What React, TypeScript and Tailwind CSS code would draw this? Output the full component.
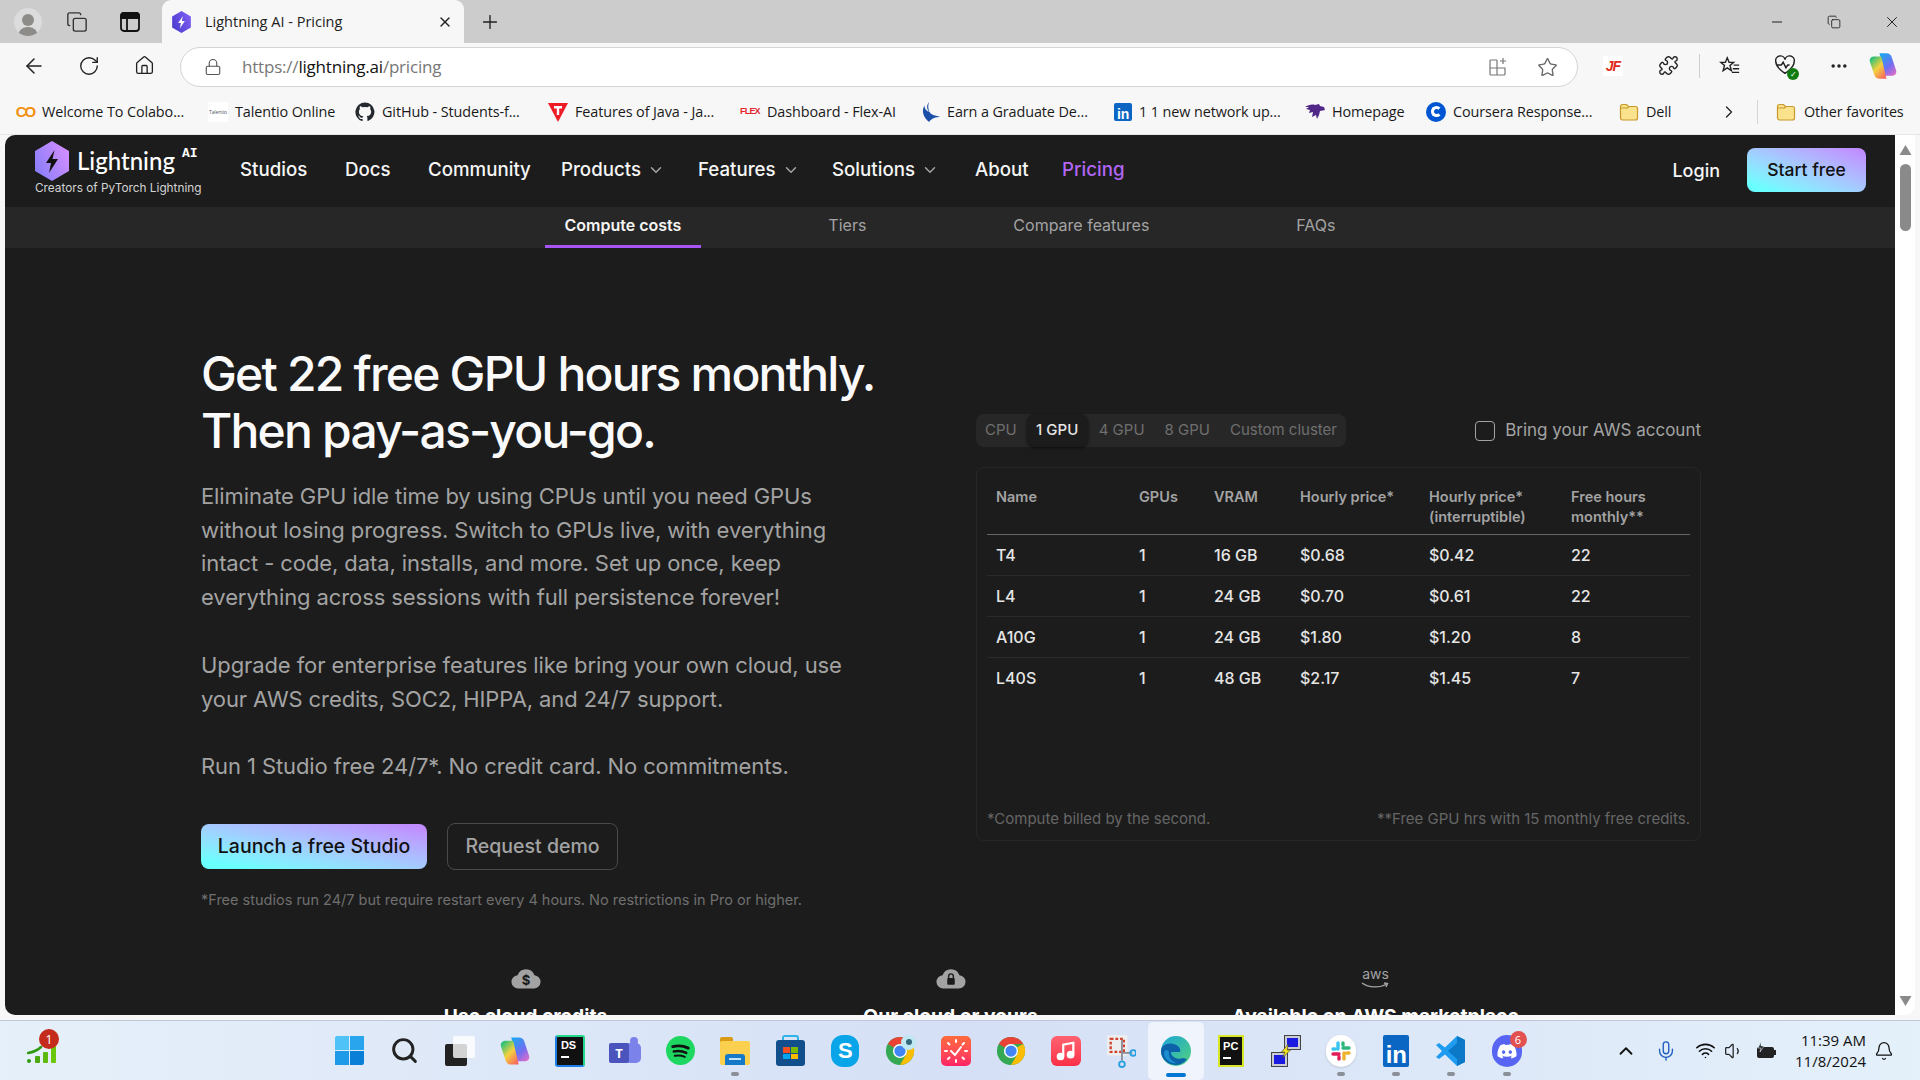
import React from 'react';
import {
  ArrowLeft, RotateCw, House, Lock, Star, Puzzle, Ellipsis, ChevronRight, ChevronDown, ChevronUp,
  Bell, Mic, Wifi, Volume1, Minus, X, Plus, Copy, Search,
} from 'lucide-react';

const Hex = ({ className, from, to, bolt }: { className: string; from: string; to: string; bolt: string }) => {
  const id = `hex-${from.slice(1)}`;
  return (
    <svg viewBox="0 0 34 40" className={className}>
      <defs>
        <linearGradient id={id} x1="0" y1="1" x2="1" y2="0.4">
          <stop offset="0" stopColor={from} />
          <stop offset="1" stopColor={to} />
        </linearGradient>
      </defs>
      <path d="M17 0 34 10v20L17 40 0 30V10z" fill={`url(#${id})`} />
      <path d="M19.5 9 11 22h5l-2 10 9-14h-5.5z" fill={bolt} />
    </svg>
  );
};

const Folder = () => (
  <svg viewBox="0 0 20 20" className="w-5 h-5">
    <path d="M1.5 4.5a2 2 0 0 1 2-2h4l2 2h7a2 2 0 0 1 2 2v9.500a2 2 0 0 1-2 2h-13a2 2 0 0 1-2-2z" fill="#fbe38e" stroke="#c79a2b" strokeWidth="1.200" />
    <path d="M1.500 6h7l1.500-1.500" fill="none" stroke="#c79a2b" strokeWidth="1.200" />
  </svg>
);

const Copilot = ({ className, id }: { className: string; id: string }) => (
  <svg viewBox="0 0 32 32" className={className}>
    <defs>
      <linearGradient id={`${id}-a`} x1="0.2" y1="0" x2="0.9" y2="1">
        <stop offset="0" stopColor="#1fa5f0" />
        <stop offset="0.55" stopColor="#6f6ff2" />
        <stop offset="1" stopColor="#e46cc8" />
      </linearGradient>
      <linearGradient id={`${id}-b`} x1="0.1" y1="0.1" x2="0.8" y2="1">
        <stop offset="0" stopColor="#27c27a" />
        <stop offset="0.5" stopColor="#f4d13f" />
        <stop offset="1" stopColor="#f66b5c" />
      </linearGradient>
    </defs>
    <path d="M12 1.500h8c3 0 5 1.500 6 4.500l5 15c1 3.500-1.500 6-5 6h-8z" fill={`url(#${id}-a)`} />
    <path d="M20 30.500h-8c-3 0-5-1.500-6-4.500L1 11C0 7.500 2.500 5 6 5h8z" fill={`url(#${id}-b)`} />
  </svg>
);

const GitHubMark = () => (
  <svg viewBox="0 0 24 24" className="w-5 h-5" fill="#24292f">
    <path d="M12 .5a11.500 11.500 0 0 0-3.640 22.410c.58.100.79-.25.790-.56v-2c-3.200.700-3.880-1.540-3.880-1.540-.52-1.330-1.280-1.690-1.280-1.690-1.050-.71.080-.7.080-.7 1.160.08 1.770 1.190 1.770 1.190 1.030 1.760 2.700 1.250 3.360.96.100-.75.400-1.250.730-1.540-2.550-.29-5.240-1.280-5.240-5.680 0-1.250.45-2.280 1.180-3.080-.12-.29-.51-1.460.11-3.040 0 0 .96-.31 3.160 1.180a11 11 0 0 1 5.760 0c2.200-1.490 3.160-1.180 3.160-1.180.62 1.580.23 2.750.11 3.040.74.800 1.180 1.830 1.180 3.080 0 4.410-2.690 5.380-5.250 5.670.410.360.780 1.050.780 2.120v3.140c0 .31.210.67.800.56A11.500 11.500 0 0 0 12 .5z" />
  </svg>
);

const LinkedIn = ({ className }: { className: string }) => (
  <span className={`${className} bg-[#0a66c2] rounded-[2px] flex items-end justify-center text-white font-bold leading-none font-['Liberation_Sans',sans-serif]`}>in</span>
);

const Chrome = ({ className }: { className: string }) => (
  <svg viewBox="0 0 32 32" className={className}>
    <circle cx="16" cy="16" r="15" fill="#34a853" />
    <path d="M16 1a15 15 0 0 1 13 7.500H16a7.500 7.500 0 0 0-6.500 3.750L3 8.500A15 15 0 0 1 16 1z" fill="#ea4335" />
    <path d="M29 8.500A15 15 0 0 1 16 31l6.500-11.250A7.500 7.500 0 0 0 22.500 12z" fill="#fbbc04" />
    <circle cx="16" cy="16" r="7.500" fill="#fff" />
    <circle cx="16" cy="16" r="6" fill="#4285f4" />
  </svg>
);

const bookmarks = [
  { label: 'Welcome To Colabo...', w: 'w-[193px]', icon: <span className="w-5 text-center text-[15px] leading-none font-black tracking-[-2px] text-[#f29111] font-['Liberation_Sans',sans-serif]">CO</span> },
  { label: 'Talentio Online', w: 'w-[147px]', icon: <span className="w-5 h-5 bg-white text-[5px] leading-5 text-center text-gray-600">Talentio</span> },
  { label: 'GitHub - Students-f...', w: 'w-[193px]', icon: <GitHubMark /> },
  { label: 'Features of Java - Ja...', w: 'w-[192px]', icon: <svg viewBox="0 0 20 20" className="w-5 h-5"><path d="M0 1h20L10 20z" fill="#ee1c25" /><path d="M6 4h8v2.500h-2.800V13H8.800V6.500H6z" fill="#fff" /></svg> },
  { label: 'Dashboard - Flex-AI', w: 'w-[180px]', icon: <span className="w-5 text-[9px] font-black leading-none tracking-[-0.8px] text-[#e3262e] font-['Liberation_Sans',sans-serif]">FLEX</span> },
  { label: 'Earn a Graduate De...', w: 'w-[194px]', icon: <svg viewBox="0 0 20 20" className="w-5 h-5" fill="#1c4fa8"><path d="M9 0C6 4 7 7 9 10 5 8 4 5 5 3 1 8 3 15 9 20c1-2 3-3 5-4 2-1 4-1 6-1-4-2-9-1-11-6-1-3-1-6 0-9z" /></svg> },
  { label: '1 1 new network up...', w: 'w-[191px]', icon: <LinkedIn className="w-[18px] h-[18px] text-[14px]" /> },
  { label: 'Homepage', w: 'w-[121px]', icon: <svg viewBox="0 0 20 20" className="w-5 h-5" fill="#512888"><path d="M0 5c3-2 7-3 10-2l4-1 1 2 4 1 1 3-5 1-1 4-2 4-1-4-4 2 1-5-4 1 1-3-4-1 3-2z" /></svg> },
  { label: 'Coursera Response...', w: 'w-[193px]', icon: <span className="w-5 h-5 rounded-full bg-[#0056d2] flex items-center justify-center"><span className="w-[11px] h-[11px] rounded-full border-[3px] border-white border-r-transparent" /></span> },
  { label: 'Dell', w: 'w-[106px]', icon: <Folder /> },
];

const navItems = [
  { label: 'Studios', w: 'w-[105px]' },
  { label: 'Docs', w: 'w-[83px]' },
  { label: 'Community', w: 'w-[133px]' },
  { label: 'Products', w: 'w-[137px]', caret: true },
  { label: 'Features', w: 'w-[134px]', caret: true },
  { label: 'Solutions', w: 'w-[143px]', caret: true },
  { label: 'About', w: 'w-[87px]' },
];

const subNav = ['Compute costs', 'Tiers', 'Compare features', 'FAQs'];

const rows = [
  ['T4', '1', '16 GB', '$0.68', '$0.42', '22'],
  ['L4', '1', '24 GB', '$0.70', '$0.61', '22'],
  ['A10G', '1', '24 GB', '$1.80', '$1.20', '8'],
  ['L40S', '1', '48 GB', '$2.17', '$1.45', '7'],
];

const gridCols = 'grid grid-cols-[143px_75px_86px_129px_142px_1fr] pl-[9px]';

const Dot = () => <span className="absolute bottom-[4px] left-1/2 -translate-x-1/2 w-2 h-1 rounded-full bg-[#8a8f98]" />;

const taskIcons: { key: string; node: React.ReactNode; dot?: boolean; active?: boolean }[] = [
  { key: 'win', node: <span className="grid grid-cols-2 gap-[1px] w-[29px] h-[29px]"><i className="bg-[#4fc3f7] rounded-tl-[2px]" /><i className="bg-[#29a5ee]" /><i className="bg-[#1e9be8]" /><i className="bg-[#0a7fd8] rounded-br-[2px]" /></span> },
  { key: 'search', node: <Search className="w-[29px] h-[29px] text-[#222]" strokeWidth={2.4} /> },
  { key: 'tasks', node: <span className="relative w-[30px] h-[30px]"><span className="absolute left-0 bottom-0 w-[22px] h-[22px] bg-[#222] rounded-[2px]" /><span className="absolute right-0 top-0 w-[22px] h-[22px] bg-white/80 rounded-[2px]" /></span> },
  { key: 'copilot', node: <Copilot id="cop-task" className="w-[30px] h-[32px]" /> },
  { key: 'ds', node: <span className="w-[30px] h-[32px] bg-[#111] border-2 border-t-[#21d789] border-r-[#21d789] border-l-[#1a7fe8] border-b-[#1a7fe8] rounded-[3px] text-white text-[11px] font-bold leading-[13px] pl-[4px] pt-[2px] font-['Liberation_Sans',sans-serif]">DS<span className="block w-2 h-[2px] bg-white mt-[4px]" /></span> },
  { key: 'teams', node: <span className="relative w-[32px] h-[28px]"><span className="absolute right-0 top-[6px] w-[16px] h-[20px] bg-[#7b83eb] rounded-[5px]" /><span className="absolute right-[3px] top-0 w-[8px] h-[8px] bg-[#7b83eb] rounded-full" /><span className="absolute left-0 top-[6px] w-[20px] h-[20px] bg-[#4b53bc] rounded-[2px] text-white text-[13px] font-bold text-center leading-[20px]">T</span></span> },
  { key: 'spotify', node: <svg viewBox="0 0 30 30" className="w-[29px] h-[29px]"><circle cx="15" cy="15" r="15" fill="#1ed760" /><g fill="none" stroke="#111" strokeLinecap="round"><path d="M7 11c6-1.500 11-1 16 1.500" strokeWidth="3" /><path d="M8 16c5-1 9-.5 13 1.500" strokeWidth="2.500" /><path d="M9 20.500c4-.8 7-.5 10.500 1" strokeWidth="2" /></g></svg> },
  { key: 'explorer', dot: true, node: <span className="relative w-[30px] h-[28px]"><span className="absolute left-0 top-0 w-[13px] h-[8px] bg-[#d99a16] rounded-t-[2px]" /><span className="absolute inset-x-0 top-[4px] bottom-0 bg-[#fbd04f] rounded-[2px]" /><span className="absolute left-[5px] right-[5px] bottom-0 h-[11px] bg-[#1578c9] rounded-t-[3px]"><span className="block mx-auto mt-[4px] w-[12px] h-[2px] bg-[#bfe4ff]" /></span></span> },
  { key: 'store', node: <span className="relative w-[29px] h-[31px]"><span className="absolute left-[6px] top-0 w-[17px] h-[8px] border-2 border-b-0 border-[#2fb4e8] rounded-t-[3px]" /><span className="absolute inset-x-0 top-[5px] bottom-0 bg-[#114f8c] rounded-[3px] grid grid-cols-2 gap-[1px] p-[7px]"><i className="bg-[#f25022]" /><i className="bg-[#7fba00]" /><i className="bg-[#00a4ef]" /><i className="bg-[#ffb900]" /></span></span> },
  { key: 'skype', node: <span className="w-[28px] h-[32px] rounded-[12px] bg-[#0aa5e8] text-white font-bold text-[22px] leading-[32px] text-center font-['Liberation_Sans',sans-serif]">S</span> },
  { key: 'chrome-profile', node: <span className="relative w-[30px] h-[30px]"><Chrome className="w-[30px] h-[30px]" /><span className="absolute -top-[1px] -right-[1px] w-[15px] h-[15px] rounded-full bg-[#bfe8f2] flex items-center justify-center"><span className="w-[6px] h-[6px] rounded-full bg-[#33697d]" /></span></span> },
  { key: 'clock', node: <span className="w-[30px] h-[30px] rounded-[5px] bg-gradient-to-b from-[#ff6a3c] to-[#ff1f63] flex items-center justify-center"><svg viewBox="0 0 30 30" className="w-[30px] h-[30px]" fill="none" stroke="#fff" strokeWidth="2" strokeLinecap="round"><path d="M10 15l4 4 6-8M15 4v2M15 24v2M4 15h2M24 15h2M7 7l1.500 1.500M23 7l-1.500 1.500M7 23l1.500-1.500M23 23l-1.500-1.500" /></svg></span> },
  { key: 'chrome', node: <Chrome className="w-[30px] h-[30px]" /> },
  { key: 'music', node: <span className="w-[30px] h-[30px] rounded-[6px] bg-gradient-to-b from-[#ff6170] to-[#fb2d48] flex items-center justify-center"><svg viewBox="0 0 24 24" className="w-[22px] h-[22px]" fill="none" stroke="#fff" strokeWidth="2.400"><path d="M9 18V5l11-2v13" /><circle cx="6" cy="18" r="3" fill="#fff" /><circle cx="17" cy="16" r="3" fill="#fff" /></svg></span> },
  { key: 'snip', node: <svg viewBox="0 0 32 36" className="w-[30px] h-[34px]"><rect x="1" y="1" width="22" height="22" rx="2" fill="#eceef0" /><rect x="5" y="5" width="14" height="14" fill="none" stroke="#d4402b" strokeWidth="2.500" strokeDasharray="3 2" /><path d="M17 6v22" stroke="#8a8f98" strokeWidth="2" /><path d="M17 20 28 20" stroke="#8a8f98" strokeWidth="2" /><circle cx="17" cy="32" r="3" fill="none" stroke="#2a9fe0" strokeWidth="2" /><circle cx="29" cy="20" r="3" fill="none" stroke="#2a9fe0" strokeWidth="2" /></svg> },
  { key: 'edge', active: true, node: <svg viewBox="0 0 32 32" className="w-[32px] h-[32px]"><defs><linearGradient id="edge-a" x1="0" y1="0" x2="1" y2="1"><stop offset="0" stopColor="#1ba5d8" /><stop offset="1" stopColor="#52d17c" /></linearGradient></defs><circle cx="16" cy="16" r="15" fill="url(#edge-a)" /><path d="M1 16c0-6 7-9 13-7 5 1.500 7 5 6 8H11c0 5 6 8 12 6l4 1c-3 4-7 6-11 6C8 30 1 24 1 16z" fill="#0c62a8" /><path d="M9 17c-1 5 3 10 8 11-6 1-12-3-13-9 0-3 2-6 5-2z" fill="#1b8fd0" /></svg> },
  { key: 'pycharm', node: <span className="w-[26px] h-[32px] bg-[#111] border-2 border-[#d8e62a] text-white text-[11px] font-bold leading-[13px] pl-[3px] pt-[3px] font-['Liberation_Sans',sans-serif]">PC<span className="block w-2 h-[2px] bg-white mt-[4px]" /></span> },
  { key: 'putty', node: <span className="relative w-[30px] h-[32px]"><span className="absolute right-0 top-0 w-[17px] h-[15px] bg-[#c9ccd2] border border-[#444] p-[2px]"><span className="block w-full h-full bg-[#1a1ae0]" /></span><span className="absolute left-0 bottom-0 w-[17px] h-[15px] bg-[#c9ccd2] border border-[#444] p-[2px]"><span className="block w-full h-full bg-[#1a1ae0]" /></span><svg viewBox="0 0 12 12" className="absolute left-[8px] top-[9px] w-[14px] h-[14px]"><path d="M8 0 2 7h3l-2 5 7-7H7z" fill="#f3e11b" stroke="#333" strokeWidth=".5" /></svg></span> },
  { key: 'slack', dot: true, node: <span className="w-[30px] h-[32px] rounded-full bg-white shadow-sm flex items-center justify-center"><svg viewBox="0 0 20 20" className="w-[20px] h-[20px]" strokeWidth="3.400" strokeLinecap="round" fill="none"><path d="M7 2v6M2 8h2" stroke="#36c5f0" /><path d="M18 7h-6M12 2v2" stroke="#2eb67d" /><path d="M13 18v-6M18 12h-2" stroke="#ecb22e" /><path d="M2 13h6M8 18v-2" stroke="#e01e5a" /></svg></span> },
  { key: 'linkedin', dot: true, node: <LinkedIn className="w-[26px] h-[32px] text-[24px]" /> },
  { key: 'vscode', dot: true, node: <svg viewBox="0 0 30 32" className="w-[30px] h-[34px]"><path d="M21 1l8 4v22l-8 4L9 19.500 3 24l-3-2 6-6-6-6 3-2 6 4.500z" fill="#1f9cf0" /><path d="M21 1l8 4v22l-8 4zM21 8l-9 8 9 8z" fill="#0b79c7" fillRule="evenodd" /></svg> },
  { key: 'discord', dot: true, node: <span className="relative w-[30px] h-[32px] rounded-full bg-[#5865f2] flex items-center justify-center"><svg viewBox="0 0 24 18" className="w-[20px] h-[16px]" fill="#fff"><path d="M20 2a19 19 0 0 0-5-1.500l-.6 1.200a18 18 0 0 0-4.800 0L9 .5A19 19 0 0 0 4 2C1 6.500.2 11 .6 15.300A19 19 0 0 0 6.500 18l1.200-2-1.900-1 .5-.4a14 14 0 0 0 11.400 0l.5.4-1.900 1 1.200 2a19 19 0 0 0 5.900-2.700C23.900 10.300 22.700 6 20 2zM8 12.500c-1.100 0-2-1-2-2.300S6.900 8 8 8s2 1 2 2.200-.9 2.300-2 2.300zm8 0c-1.100 0-2-1-2-2.300S14.900 8 16 8s2 1 2 2.200-.9 2.300-2 2.300z" /></svg><span className="absolute -top-[4px] -right-[5px] w-[17px] h-[17px] rounded-full bg-[#e35050] text-white text-[11px] leading-[17px] text-center">6</span></span> },
];

const App: React.FC = () => {
  return (
    <div className="w-[1920px] h-[1080px] overflow-hidden flex flex-col bg-[#f7f7f7] font-['Open_Sans','Noto_Sans',sans-serif]">
      {/* Tab strip */}
      <div className="h-[43px] bg-[#cccccc] flex items-center shrink-0">
        <div className="ml-[14px] w-7 h-7 rounded-full bg-[#dcdcdc] flex flex-col items-center justify-end overflow-hidden">
          <span className="w-[12px] h-[12px] rounded-full bg-[#8e8c88]" />
          <span className="w-[20px] h-[9px] rounded-t-full bg-[#8e8c88] mt-[1px]" />
        </div>
        <Copy className="ml-[24px] w-[22px] h-[22px] text-[#333]" strokeWidth={1.500} />
        <svg viewBox="0 0 20 20" className="ml-[32px] w-[20px] h-[20px]" fill="none" stroke="#111" strokeWidth="1.800"><rect x="1" y="1" width="18" height="18" rx="3" /><path d="M1 6h18M7 6v13" /><path d="M1 4a3 3 0 0 1 3-3h12a3 3 0 0 1 3 3v2H1z" fill="#111" /></svg>
        <div className="ml-[22px] self-stretch w-[302px] bg-[#f7f7f7] rounded-t-[9px] flex items-center pl-[10px] pr-[11px]">
          <Hex className="w-[19px] h-[22px]" from="#4338ca" to="#7c5cf0" bolt="#ffffff" />
          <span className="ml-[14px] text-[14.500px] text-[#222] flex-1">Lightning AI - Pricing</span>
          <X className="w-[16px] h-[16px] text-[#222]" strokeWidth={2} />
        </div>
        <Plus className="ml-[15px] w-[22px] h-[22px] text-[#222]" strokeWidth={1.500} />
        <div className="ml-auto flex items-center gap-[42px] pr-[19px]">
          <Minus className="w-[16px] h-[16px] text-[#222]" strokeWidth={1.500} />
          <Copy className="w-[14px] h-[14px] text-[#222]" strokeWidth={1.500} />
          <X className="w-[18px] h-[18px] text-[#222]" strokeWidth={1.300} />
        </div>
      </div>

      {/* Toolbar */}
      <div className="h-[45px] flex items-center shrink-0 relative">
        <ArrowLeft className="ml-[22px] w-[24px] h-[24px] text-[#222]" strokeWidth={1.500} />
        <RotateCw className="ml-[32px] w-[22px] h-[22px] text-[#222]" strokeWidth={1.500} />
        <House className="ml-[34px] w-[21px] h-[21px] text-[#222]" strokeWidth={1.500} />
        <div className="ml-[25px] w-[1398px] h-[40px] bg-white border border-[#d4d4d4] rounded-full flex items-center pl-[23px] pr-[19px] mt-[3px]">
          <Lock className="w-[18px] h-[18px] text-[#555]" strokeWidth={1.500} />
          <span className="ml-[20px] text-[17px] tracking-[-0.2px] text-[#777]">https://<span className="text-[#111]">lightning.ai</span>/pricing</span>
          <svg viewBox="0 0 20 20" className="ml-auto w-[20px] h-[20px]" fill="none" stroke="#777" strokeWidth="1.200"><path d="M9 3H3a1 1 0 0 0-1 1v13a1 1 0 0 0 1 1h13a1 1 0 0 0 1-1v-6H2M9 3v15M15 1v6M12 4h6" /></svg>
          <Star className="ml-[29px] w-[21px] h-[21px] text-[#666]" strokeWidth={1.500} />
        </div>
        <span className="ml-[25px] w-[20px] h-[20px] bg-white text-[14px] leading-[20px] text-center font-black italic tracking-[-1px] text-[#e02b20] font-['Liberation_Sans',sans-serif]">JF</span>
        <Puzzle className="ml-[35px] w-[21px] h-[21px] text-[#222]" strokeWidth={1.600} />
        <span className="ml-[20px] w-px h-[24px] bg-[#cfcfcf]" />
        <svg viewBox="0 0 24 24" className="ml-[19px] w-[22px] h-[22px]" fill="none" stroke="#222" strokeWidth="1.500"><path d="M9 3l2 5h5l-4 3.500 1.500 5.500L9 14l-4.500 3L6 11.500 2 8h5zM16 11h6M15 15h7M14 19h8" /></svg>
        <span className="ml-[33px] w-[24px] h-[24px] relative">
          <svg viewBox="0 0 24 24" className="w-[22px] h-[22px]" fill="none" stroke="#222" strokeWidth="1.600"><path d="M12 21S2 15 2 8.500A5 5 0 0 1 12 6a5 5 0 0 1 10 2.500C22 15 12 21 12 21zM3 12h5l2-3 3 6 2-3h2" /></svg>
          <span className="absolute -right-[1px] -bottom-[2px] w-[12px] h-[12px] rounded-full bg-[#107c10] text-white text-[8px] leading-[12px] text-center">✓</span>
        </span>
        <Ellipsis className="ml-[31px] w-[20px] h-[20px] text-[#222]" strokeWidth={2.200} />
        <Copilot id="cop-bar" className="ml-[20px] w-[28px] h-[30px]" />
      </div>

      {/* Bookmarks */}
      <div className="h-[47px] flex items-center pl-[15px] pt-[2px] border-b border-[#e6e6e6] shrink-0 text-[14.400px] text-[#1a1a1a] tracking-[-0.1px]">
        {bookmarks.map((b) => (
          <div key={b.label} className={`${b.w} flex items-center gap-[7px] shrink-0 whitespace-nowrap`}>
            {b.icon}
            <span>{b.label}</span>
          </div>
        ))}
        <ChevronRight className="-ml-[6px] w-[20px] h-[20px] text-[#222]" strokeWidth={1.500} />
        <span className="ml-[18px] w-px h-[24px] bg-[#d6d6d6]" />
        <div className="ml-[18px] flex items-center gap-[8px] whitespace-nowrap"><Folder /><span>Other favorites</span></div>
      </div>

      {/* Browser content */}
      <div className="h-[880px] pl-[5px] pr-[5px] flex shrink-0">
        <main className="w-[1890px] h-full bg-[#1c1c1c] rounded-l-[10px] overflow-hidden font-['Inter',sans-serif]">
          <nav className="h-[72px] flex items-center pl-[30px] pr-[29px] pb-[2px]">
            <div className="w-[205px] shrink-0 -mt-[3px]">
              <div className="flex items-center">
                <Hex className="w-[34px] h-[40px]" from="#7f7cf8" to="#cf8dff" bolt="#111111" />
                <span className="ml-[8px] text-[24px] leading-none font-medium text-white font-['Lato',sans-serif]">Lightning</span>
                <span className="ml-[7px] -mt-[14px] text-[13px] font-bold text-white font-['Liberation_Mono',monospace]">AI</span>
              </div>
              <div className="text-[11.800px] leading-[15px] text-[#d4d4d4] whitespace-nowrap">Creators of PyTorch Lightning</div>
            </div>
            {navItems.map((n) => (
              <div key={n.label} className={`${n.w} shrink-0 flex items-center gap-[6px] text-[18.700px] font-medium text-[#f5f5f5]`}>
                {n.label}
                {n.caret && <ChevronDown className="w-[18px] h-[18px] text-[#a3a3a3]" strokeWidth={2} />}
              </div>
            ))}
            <div className="text-[18.700px] font-medium text-[#b266f5]">Pricing</div>
            <div className="ml-auto text-[18px] font-medium text-[#f5f5f5]">Login</div>
            <button className="ml-[27px] w-[119px] h-[44px] rounded-lg bg-gradient-to-tr from-[#69ffff] from-10% to-[#c08cff] to-95% text-[17.500px] font-medium text-[#111]">Start free</button>
          </nav>

          <div className="h-[41px] bg-[#272727] flex justify-center gap-[107px] text-[16px]">
            {subNav.map((s, i) => (
              <div key={s} className={`px-[20px] pb-[2px] flex items-center border-b-[3px] ${i === 0 ? 'border-[#a855f7] text-[#f5f5f5] font-semibold' : 'border-transparent text-[#a3a3a3]'}`}>{s}</div>
            ))}
          </div>

          <div className="w-[1500px] ml-[196px] pt-[97px] flex items-center justify-between">
            <div className="w-[720px]">
              <h1 className="text-[48px] leading-[57px] font-medium tracking-[-1.800px] text-[#fafafa]">Get 22 free GPU hours monthly.<br />Then pay-as-you-go.</h1>
              <div className="mt-[21px] text-[22px] tracking-[-0.1px] leading-[33.600px] text-[#a3a3a3]">
                <p>Eliminate GPU idle time by using CPUs until you need GPUs<br />without losing progress. Switch to GPUs live, with everything<br />intact - code, data, installs, and more. Set up once, keep<br />everything across sessions with full persistence forever!</p>
                <p className="mt-[35px]">Upgrade for enterprise features like bring your own cloud, use<br />your AWS credits, SOC2, HIPPA, and 24/7 support.</p>
                <p className="mt-[33px]">Run 1 Studio free 24/7*. No credit card. No commitments.</p>
              </div>
              <div className="mt-[40px] flex items-center gap-[20px] text-[19.500px] font-medium">
                <button className="w-[226px] h-[45px] rounded-lg bg-gradient-to-tr from-[#69ffff] from-10% to-[#c08cff] to-95% text-[#111]">Launch a free Studio</button>
                <button className="w-[171px] h-[47px] rounded-lg border border-[#4a4a4a] text-[#a3a3a3]">Request demo</button>
              </div>
              <p className="mt-[20px] text-[14.500px] leading-[20px] text-[#6f6f6f]">*Free studios run 24/7 but require restart every 4 hours. No restrictions in Pro or higher.</p>
            </div>

            <div className="w-[725px]">
              <div className="flex items-center justify-between">
                <div className="h-[33px] rounded-lg bg-[#272727] flex items-center px-[9px] text-[15px] text-[#6f6f6f]">
                  <span>CPU</span>
                  <span className="ml-[10px] w-[61px] h-[33px] rounded-lg bg-[#1c1c1c] shadow-[0_1px_3px_rgba(0,0,0,0.6)] text-[#e5e5e5] font-medium flex items-center justify-center">1 GPU</span>
                  <span className="ml-[11px]">4 GPU</span>
                  <span className="ml-[20px]">8 GPU</span>
                  <span className="ml-[20px]">Custom cluster</span>
                </div>
                <label className="flex items-center gap-[10px] text-[17px] text-[#a3a3a3]">
                  <span className="w-[20px] h-[20px] rounded-[4px] border border-[#a3a3a3]" />
                  Bring your AWS account
                </label>
              </div>
              <div className="mt-[20px] h-[374px] rounded-lg border border-[#272727] px-[10px] flex flex-col">
                <div className={`${gridCols} pt-[19px] pb-[7px] border-b border-[#666] text-[14.500px] leading-[20px] font-semibold text-[#a3a3a3]`}>
                  <span>Name</span><span>GPUs</span><span>VRAM</span><span>Hourly price*</span><span>Hourly price*<br />(interruptible)</span><span>Free hours<br />monthly**</span>
                </div>
                {rows.map((r, i) => (
                  <div key={r[0]} className={`${gridCols} h-[41px] items-center text-[16px] font-medium text-[#e5e5e5] border-b ${i < rows.length - 1 ? 'border-[#2a2a2a]' : 'border-transparent'}`}>
                    {r.map((c, j) => <span key={j}>{c}</span>)}
                  </div>
                ))}
                <div className="mt-auto pb-[10px] flex justify-between text-[15px] text-[#666]">
                  <span>*Compute billed by the second.</span>
                  <span>**Free GPU hrs with 15 monthly free credits.</span>
                </div>
              </div>
            </div>
          </div>

          <div className="w-[1275px] ml-[308px] mt-[57px] grid grid-cols-3 text-center text-[19.300px] font-bold text-white">
            <div>
              <svg viewBox="0 0 32 24" className="mx-auto w-[30px] h-[24px]" fill="#a3a3a3"><path d="M8 22a7 7 0 0 1-1-14 9.500 9.500 0 0 1 18 0 7 7 0 0 1-1 14z" /><text x="16" y="18" textAnchor="middle" fontSize="14" fontWeight="700" fill="#1c1c1c">$</text></svg>
              <div className="mt-[11px]">Use cloud credits</div>
            </div>
            <div>
              <svg viewBox="0 0 32 24" className="mx-auto w-[30px] h-[24px]" fill="#a3a3a3"><path d="M8 22a7 7 0 0 1-1-14 9.500 9.500 0 0 1 18 0 7 7 0 0 1-1 14z" /><rect x="12" y="11" width="8" height="7" rx="1" fill="#1c1c1c" /><path d="M13.500 11V9a2.500 2.500 0 0 1 5 0v2" fill="none" stroke="#1c1c1c" strokeWidth="1.500" /></svg>
              <div className="mt-[11px]">Our cloud or yours</div>
            </div>
            <div>
              <div className="mx-auto w-[30px] h-[24px] relative text-[#a3a3a3]">
                <span className="block text-[14px] leading-[14px] font-normal text-center">aws</span>
                <svg viewBox="0 0 28 8" className="w-[28px] h-[8px] mt-[1px]" fill="none" stroke="currentColor" strokeWidth="1.400"><path d="M1 1c7 5 18 5 25 1M23 1l3.500.5L25 5" /></svg>
              </div>
              <div className="mt-[11px]">Available on AWS marketplace</div>
            </div>
          </div>
        </main>

        {/* Scrollbar */}
        <div className="w-[20px] h-full bg-white rounded-br-[10px] flex flex-col items-center">
          <svg viewBox="0 0 12 10" className="mt-[10px] w-[13px] h-[10px]" fill="#8a8a8a"><path d="M6 0l6 10H0z" /></svg>
          <span className="mt-[9px] w-[11px] h-[67px] rounded-full bg-[#8a8a8a]" />
          <svg viewBox="0 0 12 10" className="mt-auto mb-[9px] w-[13px] h-[10px]" fill="#8a8a8a"><path d="M6 10 0 0h12z" /></svg>
        </div>
      </div>

      <div className="h-[5px] shrink-0" />

      {/* Taskbar */}
      <div className="h-[60px] shrink-0 border-t border-[#c0c8d8] bg-gradient-to-r from-[#e6f0fa] via-[#d5e0f6] to-[#e4f0fa] flex items-center relative">
        <div className="relative ml-[27px] w-[29px] h-[18px] mt-[6px]">
          <svg viewBox="0 0 29 18" className="w-[29px] h-[18px]"><path d="M1 8c6-1 10-3 13-6" fill="none" stroke="#2f9a12" strokeWidth="2.500" strokeLinecap="round" /><rect x="0" y="14" width="4" height="4" rx="2" fill="#2f9a12" /><rect x="8" y="11" width="5" height="7" rx="1" fill="#4aa90f" /><rect x="16" y="7" width="5" height="11" rx="1" fill="#5db90e" /><rect x="24" y="1" width="5" height="17" rx="1" fill="#6bc70c" /></svg>
          <span className="absolute -top-[16px] left-[12px] w-[20px] h-[20px] rounded-full bg-[#c42b1c] text-white text-[13px] leading-[20px] text-center">1</span>
        </div>
        <div className="ml-[266px] flex">
          {taskIcons.map((t) => (
            <div key={t.key} className={`relative w-[55.100px] h-[58px] flex items-center justify-center ${t.active ? 'bg-white/60 rounded-[5px]' : ''}`}>
              {t.node}
              {t.dot && <Dot />}
              {t.active && <span className="absolute bottom-[3px] left-1/2 -translate-x-1/2 w-[20px] h-[4px] rounded-full bg-[#0078d4]" />}
            </div>
          ))}
        </div>
        <ChevronUp className="ml-[81px] w-[22px] h-[22px] text-[#111]" strokeWidth={2} />
        <Mic className="ml-[18px] w-[22px] h-[26px] text-[#1f5fbf]" strokeWidth={1.500} />
        <Wifi className="ml-[18px] w-[21px] h-[21px] text-[#111]" strokeWidth={1.800} />
        <Volume1 className="ml-[8px] w-[20px] h-[20px] text-[#222]" strokeWidth={1.500} />
        <svg viewBox="0 0 22 18" className="ml-[11px] w-[22px] h-[18px]"><rect x="2" y="5" width="17" height="11" rx="2" fill="#222" /><rect x="19" y="8" width="2" height="5" fill="#222" /><path d="M6 0 3 6h3l-1 4 4-6H6z" fill="#222" stroke="#e4eefa" strokeWidth=".6" /></svg>
        <div className="ml-[11px] w-[78px] text-right text-[15px] leading-[21px] text-[#111] whitespace-nowrap">11:39 AM<br />11/8/2024</div>
        <Bell className="ml-[8px] w-[20px] h-[20px] text-[#111]" strokeWidth={1.500} />
      </div>
    </div>
  );
};

export default App;
